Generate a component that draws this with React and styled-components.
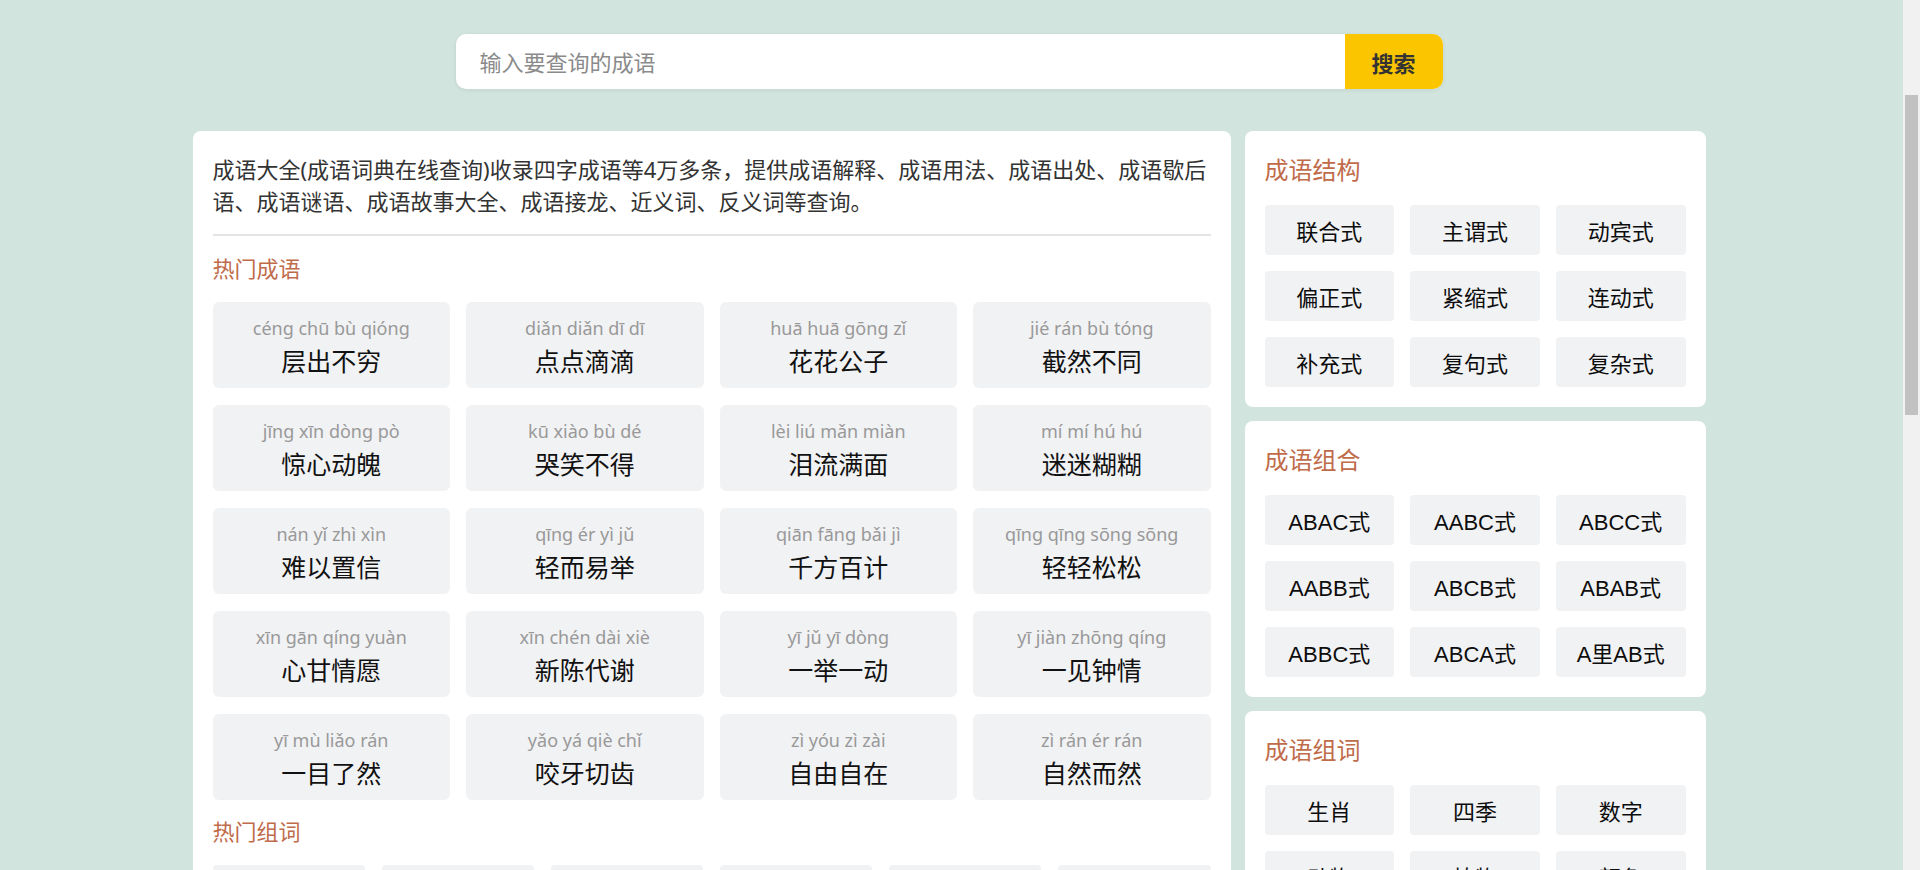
import React from 'react';
import styled, { createGlobalStyle } from 'styled-components';

const GlobalStyle = createGlobalStyle`
  html, body {
    margin: 0;
    padding: 0;
    font-family: "Noto Sans", "Noto Sans CJK SC", sans-serif;
    color: #333;
  }
  /* the reference has a classic scrollbar gutter on the right */
  body {
    background:
      linear-gradient(#c1c1c1, #c1c1c1) no-repeat right 2px top 95px / 13px 320px fixed,
      linear-gradient(to left, #f1f1f1 17px, #d2e4de 17px) fixed;
    min-height: 100vh;
  }
  * { box-sizing: border-box; }
`;

const hotIdioms = [
  ['céng chū bù qióng', '层出不穷'],
  ['diǎn diǎn dī dī', '点点滴滴'],
  ['huā huā gōng zǐ', '花花公子'],
  ['jié rán bù tóng', '截然不同'],
  ['jīng xīn dòng pò', '惊心动魄'],
  ['kū xiào bù dé', '哭笑不得'],
  ['lèi liú mǎn miàn', '泪流满面'],
  ['mí mí hú hú', '迷迷糊糊'],
  ['nán yǐ zhì xìn', '难以置信'],
  ['qīng ér yì jǔ', '轻而易举'],
  ['qiān fāng bǎi jì', '千方百计'],
  ['qīng qīng sōng sōng', '轻轻松松'],
  ['xīn gān qíng yuàn', '心甘情愿'],
  ['xīn chén dài xiè', '新陈代谢'],
  ['yī jǔ yī dòng', '一举一动'],
  ['yī jiàn zhōng qíng', '一见钟情'],
  ['yī mù liǎo rán', '一目了然'],
  ['yǎo yá qiè chǐ', '咬牙切齿'],
  ['zì yóu zì zài', '自由自在'],
  ['zì rán ér rán', '自然而然'],
];

const hotWords = ['一字', '二字', '三字', '四字', '五字', '六字', '七字', '八字', '九字', '十字', '百字', '千字'];

const sidePanels = [
  { title: '成语结构', items: ['联合式', '主谓式', '动宾式', '偏正式', '紧缩式', '连动式', '补充式', '复句式', '复杂式'] },
  { title: '成语组合', items: ['ABAC式', 'AABC式', 'ABCC式', 'AABB式', 'ABCB式', 'ABAB式', 'ABBC式', 'ABCA式', 'A里AB式'] },
  { title: '成语组词', items: ['生肖', '四季', '数字', '动物', '植物', '颜色', '人物', '地名', '其他'] },
];

const Page = styled.div`
  padding: 34px 22px 40px 0;
`;

const SearchBar = styled.form`
  width: 987px;
  height: 55px;
  margin: 0 auto;
  display: flex;
  background: #fff;
  border-radius: 10px;
  overflow: hidden;
  box-shadow: 0 1px 4px rgba(0, 0, 0, 0.08);
`;

const SearchInput = styled.input`
  flex: 1;
  border: none;
  outline: none;
  padding: 0 24px;
  font-family: inherit;
  font-size: 22px;
  color: #333;
  background: transparent;
  &::placeholder { color: #8a8a8a; }
`;

const SearchButton = styled.button`
  width: 98px;
  border: none;
  background: #fbc600;
  color: #333;
  font-family: inherit;
  font-size: 22px;
  font-weight: 700;
  cursor: pointer;
`;

const Main = styled.div`
  width: 1513px;
  margin: 42px auto 0;
  display: grid;
  grid-template-columns: 1038px 461px;
  gap: 14px;
  align-items: start;
`;

const Panel = styled.section`
  background: #fff;
  border-radius: 8px;
  padding: 20px;
`;

const Column = styled.div`
  display: flex;
  flex-direction: column;
  gap: 14px;
`;

const Intro = styled.p`
  margin: 2px 0 0;
  font-size: 22px;
  line-height: 32px;
  color: #333;
  padding-bottom: 17px;
  border-bottom: 2px solid #e4e4e4;
`;

const SectionTitle = styled.h3`
  margin: ${p => (p.$side ? '0' : p.$first ? '15px' : '14px')} 0 ${p => (p.$side ? '16px' : '17px')};
  font-size: ${p => (p.$side ? '24px' : '22px')};
  line-height: ${p => (p.$side ? '38px' : '34px')};
  font-weight: 400;
  color: #c06b4a;
`;

const IdiomGrid = styled.div`
  display: grid;
  grid-template-columns: repeat(4, 1fr);
  gap: 17px 16px;
`;

const IdiomCard = styled.a`
  height: 86px;
  background: #f1f2f4;
  border-radius: 6px;
  padding-top: 14px;
  display: flex;
  flex-direction: column;
  align-items: center;
  text-decoration: none;
`;

const Pinyin = styled.span`
  font-size: 18px;
  line-height: 24px;
  color: #999;
`;

const Hanzi = styled.span`
  margin-top: 4px;
  font-size: 25px;
  line-height: 34px;
  color: #111;
`;

const WordGrid = styled.div`
  display: grid;
  grid-template-columns: repeat(6, 1fr);
  gap: 16px 17px;
`;

const TagGrid = styled.div`
  display: grid;
  grid-template-columns: repeat(3, 1fr);
  gap: 16px;
`;

const Tag = styled.a`
  height: 50px;
  background: #f1f2f4;
  border-radius: 4px;
  display: flex;
  align-items: center;
  justify-content: center;
  font-family: "Liberation Sans", "Noto Sans CJK SC", sans-serif;
  font-size: 22px;
  color: #0d0d0d;
  text-decoration: none;
`;

export default function App() {
  return (
    <Page>
      <GlobalStyle />
      <SearchBar onSubmit={e => e.preventDefault()}>
        <SearchInput placeholder="输入要查询的成语" />
        <SearchButton type="submit">搜索</SearchButton>
      </SearchBar>
      <Main>
        <Panel>
          <Intro>
            成语大全(成语词典在线查询)收录四字成语等4万多条，提供成语解释、成语用法、成语出处、成语歇后语、成语谜语、成语故事大全、成语接龙、近义词、反义词等查询。
          </Intro>
          <SectionTitle $first>热门成语</SectionTitle>
          <IdiomGrid>
            {hotIdioms.map(([py, hz]) => (
              <IdiomCard key={hz} href="#">
                <Pinyin>{py}</Pinyin>
                <Hanzi>{hz}</Hanzi>
              </IdiomCard>
            ))}
          </IdiomGrid>
          <SectionTitle>热门组词</SectionTitle>
          <WordGrid>
            {hotWords.map(w => (
              <Tag key={w} href="#">{w}</Tag>
            ))}
          </WordGrid>
        </Panel>
        <Column>
          {sidePanels.map(panel => (
            <Panel key={panel.title}>
              <SectionTitle $side>{panel.title}</SectionTitle>
              <TagGrid>
                {panel.items.map(item => (
                  <Tag key={item} href="#">{item}</Tag>
                ))}
              </TagGrid>
            </Panel>
          ))}
        </Column>
      </Main>
    </Page>
  );
}
